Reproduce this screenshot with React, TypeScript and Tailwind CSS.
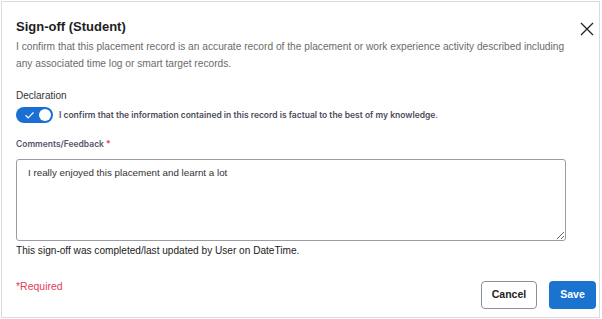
import { Check } from "lucide-react";

export default function App() {
  return (
    <div className="w-[602px] h-[319px] bg-white pt-px pl-px font-['Liberation_Sans',Arial,sans-serif]">
      <div className="w-[599px] h-[317px] border border-[#dcdcdc] flex flex-col px-[14px]">
        <div className="flex items-start justify-between pt-[17px] h-[33px]">
          <h2 className="text-[13px] leading-[16px] font-bold text-[#1e1e1e]">Sign-off (Student)</h2>
          <button className="mt-[3px] mr-[-9px] text-[#222]">
            <svg width="14" height="14" viewBox="0 0 14 14" fill="none" stroke="currentColor" strokeWidth="1.3">
              <path d="M1 1 L13 13 M13 1 L1 13" />
            </svg>
          </button>
        </div>
        <p className="mt-[3px] max-w-[552px] text-[10.2px] leading-[17px] text-[#6b6b6b]">
          I confirm that this placement record is an accurate record of the placement or work experience activity described including any associated time log or smart target records.
        </p>

        <p className="mt-[17px] text-[10px] leading-[14px] text-[#333]">Declaration</p>
        <div className="mt-[4px] flex items-center gap-[6px]">
          <div className="w-[37px] h-[16px] rounded-full bg-[#1b6fd3] flex items-center justify-between pl-[8px] pr-[2px]">
            <Check className="w-[11px] h-[11px] text-white" strokeWidth={2.5} />
            <span className="w-[12px] h-[12px] rounded-full bg-white" />
          </div>
          <span className="font-['Inter',sans-serif] font-semibold text-[8.5px] text-[#4b4b5a]">
            I confirm that the information contained in this record is factual to the best of my knowledge.
          </span>
        </div>

        <label className="mt-[15px] font-['Inter',sans-serif] font-semibold text-[8.5px] leading-[12px] text-[#55556a]">
          Comments/Feedback <span className="text-[#e0384d]">*</span>
        </label>
        <textarea
          className="mt-[9px] w-[550px] h-[82px] shrink-0 border border-[#9c9ca8] rounded-[3px] px-[11px] py-[6px] text-[9.8px] leading-[14px] text-[#333] resize-y outline-none"
          defaultValue="I really enjoyed this placement and learnt a lot"
        />
        <p className="mt-[3px] text-[10.1px] leading-[14px] text-[#222]">
          This sign-off was completed/last updated by User on DateTime.
        </p>

        <div className="mt-[23px] flex items-start justify-between">
          <span className="text-[10.5px] leading-[14px] text-[#e4405a] mt-[-2px]">*Required</span>
          <div className="flex gap-[12px] mr-[-11px]">
            <button className="w-[56px] h-[28px] rounded-[4px] border border-[#8e8e99] bg-white text-[10.5px] font-bold text-[#222]">
              Cancel
            </button>
            <button className="w-[47px] h-[28px] rounded-[4px] bg-[#1a74cf] text-[10.5px] font-bold text-white">
              Save
            </button>
          </div>
        </div>
      </div>
    </div>
  );
}
